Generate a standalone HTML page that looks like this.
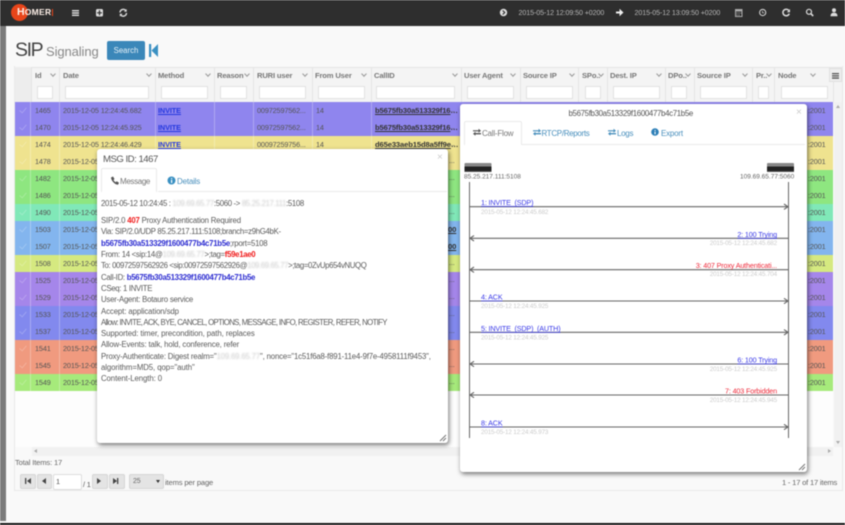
<!DOCTYPE html>
<html><head><meta charset="utf-8"><title>HOMER SIP Signaling</title>
<style>
html,body{margin:0;padding:0;background:#f9f9f9}
#p{position:relative;width:845px;height:525px;overflow:hidden;background:#f9f9f9;font-family:"Liberation Sans",sans-serif;font-size:7.3px;letter-spacing:-.15px;color:#555;filter:blur(.5px)}
#p div,#p span.a,#p i{position:absolute}
.t{white-space:nowrap}
.f{top:86px;height:11px;background:#fff;border:1px solid #e2e2e2}
.h{top:71px;font-weight:bold;font-size:7.6px;color:#777;white-space:nowrap}
i.c{top:72px;width:3px;height:3px;border-right:1px solid #999;border-bottom:1px solid #999;transform:rotate(45deg)}
.vh{top:67px;height:35px;width:1px;background:#e4e4e4}
.r{left:15px;width:818px;height:17px;line-height:17px;overflow:hidden}
.r span{position:absolute;top:0;white-space:nowrap}
.r .k{left:1px;width:14px;top:0;height:17px;border-right:1px solid rgba(255,255,255,.3)}
.r .k:after{content:"";position:absolute;left:5px;top:4px;width:3px;height:6px;border-right:1px solid rgba(255,255,255,.22);border-bottom:1px solid rgba(255,255,255,.22);transform:rotate(40deg)}
.r .i{left:20px}
.r .d{left:48px;width:96px}
.r .m{left:143px;color:#2438df;text-decoration:underline;font-weight:bold;letter-spacing:-.1px}
.r .u{left:242px}
.r .o{left:301px}
.r .l{left:360px;width:85px;overflow:hidden;text-overflow:ellipsis;font-weight:bold;color:#333;text-decoration:underline;font-size:7.6px;letter-spacing:-.12px}
.r .n{left:793px}
.r b.s{position:absolute;top:0;width:1px;height:17px;background:rgba(255,255,255,.28)}
.modal{background:#fff;border-radius:3px;box-shadow:1px 2px 5px rgba(0,0,0,.55)}
.msg{left:101px;top:215px;font-size:7.8px;line-height:11.32px;color:#5a5a5a;white-space:nowrap}
.msg p{margin:0;height:11.32px}
.msg b.bl{color:#2a2ad0}
.msg b.rd{color:#f01a1a}
.ip{color:#ccc;filter:blur(.7px)}
.tab{font-size:8px;color:#4a90bd;letter-spacing:-.05px;white-space:nowrap}
.btn{top:474px;height:13px;background:#e4e4e4;border:1px solid #d5d5d5;border-radius:2px;text-align:center;line-height:13px;font-size:7px;color:#333}
</style></head><body>
<div id="p">
<!-- top bar -->
<div style="left:0;top:0;width:845px;height:26px;background:#2e2e2e"></div>
<div style="left:0;top:26px;width:6px;height:495px;background:#7b7b7b"></div>
<div style="left:0;top:523px;width:845px;height:2px;background:#111"></div>
<div style="left:11px;top:4px;width:17px;height:17px;border-radius:50%;background:#e8451a"></div>
<div class="t" style="left:17px;top:6px;font-weight:bold;font-size:10.5px;letter-spacing:.1px;color:#fdf0e8;line-height:13px">H<span style="font-size:8.5px;letter-spacing:.3px">OMER</span></div>
<div style="left:52px;top:9px;width:1px;height:7px;background:#e8451a"></div>
<div class="t" style="left:518.500px;top:9px;color:#b5b5b5;font-size:7.1px;letter-spacing:-.08px">2015-05-12 12:09:50 +0200</div>
<div class="t" style="left:634.500px;top:9px;color:#b5b5b5;font-size:7.1px;letter-spacing:-.08px">2015-05-12 13:09:50 +0200</div>
<svg width="845" height="26" style="position:absolute;left:0;top:0" fill="#ddd" stroke="none">
<path d="M72 10h7v1.400h-7zM72 12.300h7v1.400h-7zM72 14.600h7v1.400h-7z"/>
<rect x="96" y="9" width="7" height="7.500" rx="1.500"/><path d="M98.900 10.300h1.200v1.900h1.800v1.200h-1.800v1.800h-1.200v-1.800h-1.800v-1.200h1.800z" fill="#2e2e2e"/>
<path d="M120 12.500a3.300 3.300 0 0 1 5.800-2M126.500 13a3.300 3.300 0 0 1-5.800 2" fill="none" stroke="#ddd" stroke-width="1.400"/><path d="M126.700 9v2.800h-2.800zM119.800 16.500v-2.800h2.800z"/>
<circle cx="503.500" cy="12.500" r="3.700"/><path d="M502.700 10.500l2 2-2 2" fill="none" stroke="#2e2e2e" stroke-width="1.200"/>
<path d="M616 11.500h3.500v-2.800l4 3.800-4 3.800v-2.800h-3.500z" fill="#eee"/>
<path d="M735 9h7.500v8H735z" fill="#aaa"/><path d="M736 11.500h5.500v4.500H736z" fill="#2e2e2e"/><path d="M736.500 12.500h1v1h-1zM738.500 12.500h1v1h-1zM740.500 12.500h.7v1h-.7zM736.500 14.500h1v1h-1zM738.500 14.500h1v1h-1z" fill="#aaa"/>
<circle cx="762.700" cy="12.500" r="3.100" fill="none" stroke="#ddd" stroke-width="1"/><path d="M762.500 11v1.800h1.600" fill="none" stroke="#ddd" stroke-width=".7"/>
<path d="M788.700 10.300a3.300 3.300 0 1 0 .6 3.400" fill="none" stroke="#ddd" stroke-width="1.500"/><path d="M790 9v3.200h-3.200z"/>
<circle cx="809" cy="11.800" r="2.500" fill="none" stroke="#ddd" stroke-width="1.200"/><path d="M811 13.800l2.200 2.200" stroke="#ddd" stroke-width="1.600"/>
<circle cx="834" cy="10.300" r="2"/><path d="M830.500 16.300c0-2.800 1.400-3.600 3.500-3.600s3.500.8 3.500 3.600z"/>
</svg>
<!-- title -->
<div class="t" style="left:15px;top:37px;font-size:19.500px;letter-spacing:-1.400px;color:#444;line-height:26px">SIP</div>
<div class="t" style="left:46px;top:43px;font-size:13px;letter-spacing:-.1px;color:#888;line-height:18px">Signaling</div>
<div style="left:107px;top:41px;width:38px;height:19px;background:#3b87b9;border-radius:2px;text-align:center;line-height:19px;color:#e8f2f8;font-size:7.8px;letter-spacing:0">Search</div>
<svg width="12" height="14" style="position:absolute;left:148px;top:44px"><path d="M1 0h2.200v13H1zM10 0v13L3.500 6.500z" fill="#3a90c2"/></svg>
<!-- table container -->
<div style="left:15px;top:391px;width:818px;height:56px;background:#fdfdfd"></div>
<div style="left:14px;top:66px;width:829px;height:425px;border:1px solid #e9e9e9;border-top:0;box-sizing:border-box"></div>
<div style="left:15px;top:67px;width:827px;height:35px;background:#f4f4f4;border-top:1px solid #e4e4e4;box-sizing:border-box"></div>
<div style="left:15px;top:67px;width:16px;height:35px;background:#ededed"></div>
<div class="vh" style="left:31px"></div><div class="vh" style="left:59px"></div><div class="vh" style="left:155px"></div><div class="vh" style="left:214px"></div><div class="vh" style="left:253px"></div><div class="vh" style="left:312px"></div><div class="vh" style="left:371px"></div><div class="vh" style="left:461px"></div><div class="vh" style="left:520px"></div><div class="vh" style="left:578px"></div><div class="vh" style="left:607px"></div><div class="vh" style="left:665px"></div><div class="vh" style="left:694px"></div><div class="vh" style="left:752px"></div><div class="vh" style="left:774px"></div><div class="vh" style="left:833px"></div>
<div class="h" style="left:35px">Id</div><div class="h" style="left:63px">Date</div><div class="h" style="left:158px">Method</div><div class="h" style="left:217px">Reason</div><div class="h" style="left:257px">RURI user</div><div class="h" style="left:315px">From User</div><div class="h" style="left:374px">CallID</div><div class="h" style="left:464px">User Agent</div><div class="h" style="left:523px">Source IP</div><div class="h" style="left:582px">SPo..</div><div class="h" style="left:610px">Dest. IP</div><div class="h" style="left:668px">DPo..</div><div class="h" style="left:697px">Source IP</div><div class="h" style="left:756px">Pr..</div><div class="h" style="left:778px">Node</div>
<i class="c" style="left:50.500px"></i><i class="c" style="left:146.500px"></i><i class="c" style="left:205.500px"></i><i class="c" style="left:244.500px"></i><i class="c" style="left:303px"></i><i class="c" style="left:362px"></i><i class="c" style="left:452.500px"></i><i class="c" style="left:511px"></i><i class="c" style="left:570px"></i><i class="c" style="left:599px"></i><i class="c" style="left:656.500px"></i><i class="c" style="left:686px"></i><i class="c" style="left:743px"></i><i class="c" style="left:767px"></i><i class="c" style="left:811px"></i>
<div class="f" style="left:37px;width:14px"></div><div class="f" style="left:65px;width:82px"></div><div class="f" style="left:161px;width:45px"></div><div class="f" style="left:220px;width:25px"></div><div class="f" style="left:259px;width:45px"></div><div class="f" style="left:318px;width:45px"></div><div class="f" style="left:376px;width:77px"></div><div class="f" style="left:467px;width:45px"></div><div class="f" style="left:526px;width:45px"></div><div class="f" style="left:585px;width:14px"></div><div class="f" style="left:613px;width:45px"></div><div class="f" style="left:671px;width:14px"></div><div class="f" style="left:700px;width:45px"></div><div class="f" style="left:758px;width:9px"></div><div class="f" style="left:781px;width:45px"></div>
<div style="left:829px;top:68px;width:13px;height:14px;background:#eee;border:1px solid #e0e0e0;box-sizing:border-box"></div>
<svg width="9" height="8" style="position:absolute;left:831.500px;top:72.500px"><path d="M0 0h7v1.300H0zM0 2.200h7v1.300H0zM0 4.400h7v1.300H0z" fill="#555"/></svg>
<!-- rows -->
<div class="r" style="top:102px;background:#8f85ee"><span class="k"></span><b class="s" style="left:44px"></b><b class="s" style="left:140px"></b><b class="s" style="left:199px"></b><b class="s" style="left:238px"></b><b class="s" style="left:297px"></b><b class="s" style="left:356px"></b><span class="i">1465</span><span class="d">2015-12-05 12:24:45.682</span><span class="m">INVITE</span><span class="u">00972597562...</span><span class="o">14</span><span class="l">b5675fb30a513329f1600477b4c71b5e</span><span class="n">:2001</span></div>
<div class="r" style="top:119px;background:#8f85ee"><span class="k"></span><b class="s" style="left:44px"></b><b class="s" style="left:140px"></b><b class="s" style="left:199px"></b><b class="s" style="left:238px"></b><b class="s" style="left:297px"></b><b class="s" style="left:356px"></b><span class="i">1470</span><span class="d">2015-12-05 12:24:45.925</span><span class="m">INVITE</span><span class="u">00972597562...</span><span class="o">14</span><span class="l">b5675fb30a513329f1600477b4c71b5e</span><span class="n">:2001</span></div>
<div class="r" style="top:136px;background:#efe38f"><span class="k"></span><b class="s" style="left:44px"></b><b class="s" style="left:140px"></b><b class="s" style="left:199px"></b><b class="s" style="left:238px"></b><b class="s" style="left:297px"></b><b class="s" style="left:356px"></b><span class="i">1474</span><span class="d">2015-12-05 12:24:46.429</span><span class="m">INVITE</span><span class="u">00097259756...</span><span class="o">14</span><span class="l">d65e33aeb15d8a5ff9e0477b4c71b5e</span><span class="n">:2001</span></div>
<div class="r" style="top:153px;background:#efe38f"><span class="k"></span><b class="s" style="left:44px"></b><span class="i">1478</span><span class="d">2015-12-05 12:24:46.501</span><span class="n">:2001</span></div>
<div class="r" style="top:170px;background:#8ee680"><span class="k"></span><b class="s" style="left:44px"></b><span class="i">1482</span><span class="d">2015-12-05 12:24:46.722</span><span class="n">:2001</span></div>
<div class="r" style="top:187px;background:#8ee680"><span class="k"></span><b class="s" style="left:44px"></b><span class="i">1486</span><span class="d">2015-12-05 12:24:46.811</span><span class="n">:2001</span></div>
<div class="r" style="top:204px;background:#80e8b8"><span class="k"></span><b class="s" style="left:44px"></b><span class="i">1490</span><span class="d">2015-12-05 12:24:46.990</span><span class="n">:2001</span></div>
<div class="r" style="top:221px;background:#83b5ee"><span class="k"></span><b class="s" style="left:44px"></b><span class="i">1503</span><span class="d">2015-12-05 12:24:47.102</span><span class="l" style="left:433px;width:12px">00</span><span class="n">:2001</span></div>
<div class="r" style="top:238px;background:#83b5ee"><span class="k"></span><b class="s" style="left:44px"></b><span class="i">1507</span><span class="d">2015-12-05 12:24:47.203</span><span class="l" style="left:433px;width:12px">00</span><span class="n">:2001</span></div>
<div class="r" style="top:255px;background:#d5e980"><span class="k"></span><b class="s" style="left:44px"></b><span class="i">1508</span><span class="d">2015-12-05 12:24:47.310</span><span class="n">:2001</span></div>
<div class="r" style="top:272px;background:#a586ea"><span class="k"></span><b class="s" style="left:44px"></b><span class="i">1525</span><span class="d">2015-12-05 12:24:47.422</span><span class="n">:2001</span></div>
<div class="r" style="top:289px;background:#a586ea"><span class="k"></span><b class="s" style="left:44px"></b><span class="i">1529</span><span class="d">2015-12-05 12:24:47.533</span><span class="n">:2001</span></div>
<div class="r" style="top:306px;background:#8289ee"><span class="k"></span><b class="s" style="left:44px"></b><span class="i">1533</span><span class="d">2015-12-05 12:24:47.644</span><span class="n">:2001</span></div>
<div class="r" style="top:323px;background:#8289ee"><span class="k"></span><b class="s" style="left:44px"></b><span class="i">1537</span><span class="d">2015-12-05 12:24:47.755</span><span class="n">:2001</span></div>
<div class="r" style="top:340px;background:#f09a7f"><span class="k"></span><b class="s" style="left:44px"></b><span class="i">1541</span><span class="d">2015-12-05 12:24:47.866</span><span class="n">:2001</span></div>
<div class="r" style="top:357px;background:#f09a7f"><span class="k"></span><b class="s" style="left:44px"></b><span class="i">1545</span><span class="d">2015-12-05 12:24:47.977</span><span class="n">:2001</span></div>
<div class="r" style="top:374px;background:#a6ea7b"><span class="k"></span><b class="s" style="left:44px"></b><span class="i">1549</span><span class="d">2015-12-05 12:24:48.088</span><span class="n">:2001</span></div>
<!-- slivers between modals -->
<div class="t" style="left:449px;top:105px;color:#555">...</div><div class="t" style="left:449px;top:122px;color:#555">...</div><div class="t" style="left:449px;top:139px;color:#555">...</div><div class="t" style="left:449px;top:156px;color:#555">...</div><div class="t" style="left:449px;top:173px;color:#555">...</div><div class="t" style="left:449px;top:190px;color:#555">...</div><div class="t" style="left:449px;top:207px;color:#555">...</div><div class="t" style="left:449px;top:258px;color:#555">...</div><div class="t" style="left:449px;top:275px;color:#555">...</div><div class="t" style="left:449px;top:292px;color:#555">...</div><div class="t" style="left:449px;top:309px;color:#555">...</div><div class="t" style="left:449px;top:326px;color:#555">...</div><div class="t" style="left:449px;top:343px;color:#555">...</div><div class="t" style="left:449px;top:360px;color:#555">...</div><div class="t" style="left:449px;top:377px;color:#555">...</div>
<!-- scrollbars -->
<div style="left:834px;top:102px;width:8px;height:345px;background:#f1f1f1"></div>
<div style="left:836px;top:105px;width:0;height:0;border:2px solid transparent;border-bottom:3px solid #aaa;border-top:0"></div>
<div style="left:836px;top:441px;width:0;height:0;border:2px solid transparent;border-top:3px solid #aaa;border-bottom:0"></div>
<div style="left:32px;top:447px;width:801px;height:9px;background:#f1f1f1"></div>
<div style="left:34px;top:449px;width:0;height:0;border:2px solid transparent;border-right:3px solid #aaa;border-left:0"></div>
<div style="left:828px;top:449px;width:0;height:0;border:2px solid transparent;border-left:3px solid #aaa;border-right:0"></div>
<!-- footer -->
<div class="t" style="left:15px;top:458px;color:#666;font-size:7.6px">Total Items: 17</div>
<div class="btn" style="left:20px;width:14px"></div><div class="btn" style="left:37px;width:13px"></div>
<div style="left:53px;top:474px;width:27px;height:14px;background:#fff;border:1px solid #ddd;border-radius:2px;line-height:14px;text-indent:2px;font-size:7.3px">1</div>
<div class="t" style="left:83px;top:480px;font-size:7.3px">/ 1</div>
<div class="btn" style="left:92px;width:14px"></div><div class="btn" style="left:109px;width:14px"></div>
<div class="btn" style="left:129px;width:33px;text-align:left;text-indent:3px;color:#666">25</div>
<div style="left:156px;top:480px;width:0;height:0;border:2px solid transparent;border-top:3px solid #333;border-bottom:0"></div>
<div class="t" style="left:165px;top:478px;color:#666;font-size:7.6px">items per page</div>
<div class="t" style="left:782px;top:478px;color:#666;font-size:7.6px;letter-spacing:-.2px">1 - 17 of 17 items</div>
<svg width="125" height="10" style="position:absolute;left:0;top:477px" fill="#444"><path d="M25 1h1.300v6H25zM31 1v6l-4-3zM46 1v6l-4-3zM97 1v6l4-3zM113 1v6l4-3zM117 1h1.300v6H117z"/></svg>
<!-- MSG modal -->
<div class="modal" style="left:97px;top:149px;width:351px;height:294px"></div>
<div class="t" style="left:103px;top:153px;font-size:9.600px;color:#555;letter-spacing:-.5px;line-height:13px">MSG ID: 1467</div>
<div class="t" style="left:437px;top:152px;font-size:10px;color:#ccc">×</div>
<div style="left:158px;top:191px;width:289px;height:1px;background:#eaeaea"></div>
<div style="left:101px;top:168px;width:56px;height:24px;background:#fff;border:1px solid #eaeaea;border-bottom:0;box-sizing:border-box;border-radius:2px 2px 0 0"></div>
<svg width="10" height="10" style="position:absolute;left:110px;top:176px"><path d="M1 1.500l2-1 1.500 2.500-1 1c.5 1 1.200 1.700 2.200 2.200l1-1 2.300 1.500-1 2C5 8.700 1.300 5 1 1.500z" fill="#555"/></svg>
<div class="tab" style="left:120px;top:177px;color:#777;letter-spacing:-.35px">Message</div>
<svg width="9" height="9" style="position:absolute;left:167px;top:175.500px"><circle cx="4.500" cy="4.500" r="4" fill="#3a90c2"/><path d="M4 2h1.200v1H4zM4 3.800h1.200V7H4z" fill="#fff"/></svg>
<div class="tab" style="left:177px;top:177px;letter-spacing:-.2px">Details</div>
<div class="t" style="left:101px;top:199px;font-size:7.800px;color:#5a5a5a;letter-spacing:-.34px">2015-05-12 10:24:45 : <span class="ip">109.69.65.77</span>:5060 -&gt; <span class="ip">85.25.217.111</span>:5108</div>
<div class="msg">
<p style="letter-spacing:-.195px">SIP/2.0 <b class="rd">407</b> Proxy Authentication Required</p>
<p style="letter-spacing:-.31px">Via: SIP/2.0/UDP 85.25.217.111:5108;branch=z9hG4bK-</p>
<p style="letter-spacing:-.25px"><b class="bl">b5675fb30a513329f1600477b4c71b5e</b>;rport=5108</p>
<p style="letter-spacing:-.3px">From: 14 &lt;sip:14@<span class="ip">109.69.65.77</span>&gt;;tag=<b class="rd">f59e1ae0</b></p>
<p style="letter-spacing:-.375px">To: 00972597562926 &lt;sip:00972597562926@<span class="ip">109.69.65.77</span>&gt;;tag=0ZvUp654vNUQQ</p>
<p style="letter-spacing:-.27px">Call-ID: <b class="bl">b5675fb30a513329f1600477b4c71b5e</b></p>
<p style="letter-spacing:-.31px">CSeq: 1 INVITE</p>
<p style="letter-spacing:-.22px">User-Agent: Botauro service</p>
<p style="letter-spacing:-.1px">Accept: application/sdp</p>
<p style="letter-spacing:-.64px">Allow: INVITE, ACK, BYE, CANCEL, OPTIONS, MESSAGE, INFO, REGISTER, REFER, NOTIFY</p>
<p style="letter-spacing:-.08px">Supported: timer, precondition, path, replaces</p>
<p style="letter-spacing:-.135px">Allow-Events: talk, hold, conference, refer</p>
<p style="letter-spacing:-.17px">Proxy-Authenticate: Digest realm="<span class="ip">109.69.65.77</span>", nonce="1c51f6a8-f891-11e4-9f7e-4958111f9453",</p>
<p style="letter-spacing:-.08px">algorithm=MD5, qop="auth"</p>
<p style="letter-spacing:-.08px">Content-Length: 0</p>
</div>
<svg width="8" height="8" style="position:absolute;left:439px;top:434px"><path d="M7 1L1 7M7 4L4 7" stroke="#777" stroke-width="1"/></svg>
<!-- Flow modal -->
<div class="modal" style="left:460px;top:104px;width:347px;height:368px"></div>
<div class="t" style="left:568.500px;top:109px;font-size:7.900px;color:#555;letter-spacing:-.35px">b5675fb30a513329f1600477b4c71b5e</div>
<div class="t" style="left:796px;top:107px;font-size:10px;color:#ccc">×</div>
<div style="left:522px;top:144px;width:283px;height:1px;background:#eaeaea"></div>
<div style="left:464px;top:121px;width:58px;height:24px;background:#fff;border:1px solid #eaeaea;border-bottom:0;box-sizing:border-box;border-radius:2px 2px 0 0"></div>
<svg width="845" height="525" style="position:absolute;left:0;top:0" font-family="Liberation Sans, sans-serif">
<path d="M473 130.200h5.500v-1.400l2.500 2-2.500 2v-1.400H473zM481 133h-5.500v-1.200L473 133.800l2.500 2v-1.400H481z" fill="#555"/>
<path d="M533 130.200h5.500v-1.400l2.500 2-2.500 2v-1.400H533zM541 133h-5.500v-1.200L533 133.800l2.500 2v-1.400H541zM608 130.200h5.500v-1.400l2.500 2-2.500 2v-1.400H608zM616 133h-5.500v-1.200L608 133.800l2.500 2v-1.400H616z" fill="#4a90bd"/>
<circle cx="655" cy="132" r="3.800" fill="#2f80b8"/><path d="M654.500 130h1.100v1h-1.100zM654.500 131.700h1.100v2.600h-1.100z" fill="#fff"/>
<rect x="464.500" y="163" width="27" height="4" rx="1" fill="#888"/><rect x="464.500" y="166.500" width="27" height="4.500" fill="#222"/><rect x="464.500" y="171" width="27" height="1" fill="#555"/>
<rect x="767" y="163" width="27" height="4" rx="1" fill="#888"/><rect x="767" y="166.500" width="27" height="4.500" fill="#222"/><rect x="767" y="171" width="27" height="1" fill="#555"/>
<text x="464" y="178.500" font-size="6.500px" fill="#666" letter-spacing="0">85.25.217.111:5108</text>
<text x="740" y="178.500" font-size="6.500px" fill="#666" letter-spacing="0">109.69.65.77:5060</text>
<path d="M469.500 182V438M788.500 182V438" stroke="#666" stroke-width="1" fill="none"/>
<g stroke="#666" stroke-width="1.100" fill="none">
<path d="M470 206.700H788M784 204l4 2.700-4 2.700"/>
<path d="M470 238.300H788M474 235.600l-4 2.700 4 2.700"/>
<path d="M470 269.700H788M474 267l-4 2.700 4 2.700"/>
<path d="M470 301H788M784 298.300l4 2.700-4 2.700"/>
<path d="M470 332.300H788M784 329.600l4 2.700-4 2.700"/>
<path d="M470 364H788M474 361.300l-4 2.700 4 2.700"/>
<path d="M470 395H788M474 392.300l-4 2.700 4 2.700"/>
<path d="M470 427H788M784 424.300l4 2.700-4 2.700"/>
</g>
<g font-size="7.200px" fill="#3a3ae8" text-decoration="underline">
<text x="481" y="205">1: INVITE&#160;&#160;(SDP)</text>
<text x="777" y="237" text-anchor="end">2: 100 Trying</text>
<text x="481" y="299.500">4: ACK</text>
<text x="481" y="331">5: INVITE&#160;&#160;(SDP)&#160;&#160;(AUTH)</text>
<text x="777" y="362.500" text-anchor="end">6: 100 Trying</text>
<text x="481" y="425.500">8: ACK</text>
</g>
<g font-size="7.200px" fill="#ee2a3a">
<text x="777" y="268" text-anchor="end">3: 407 Proxy Authenticati...</text>
<text x="777" y="393.500" text-anchor="end">7: 403 Forbidden</text>
</g>
<g font-size="6.300px" fill="#cccccc">
<text x="481" y="214">2015-05-12 12:24:45.682</text>
<text x="777" y="245" text-anchor="end">2015-05-12 12:24:45.682</text>
<text x="777" y="276" text-anchor="end">2015-05-12 12:24:45.704</text>
<text x="481" y="308">2015-05-12 12:24:45.925</text>
<text x="481" y="339.500">2015-05-12 12:24:45.925</text>
<text x="777" y="371" text-anchor="end">2015-05-12 12:24:45.925</text>
<text x="777" y="402" text-anchor="end">2015-05-12 12:24:45.945</text>
<text x="481" y="434">2015-05-12 12:24:45.973</text>
</g>
<path d="M805 464l-6 6M805 467l-3 3" stroke="#777" stroke-width="1"/>
</svg>
<div class="tab" style="left:482px;top:129px;color:#777;letter-spacing:-.22px">Call-Flow</div>
<div class="tab" style="left:541.500px;top:129px;letter-spacing:-.33px">RTCP/Reports</div>
<div class="tab" style="left:617px;top:129px;letter-spacing:-.3px">Logs</div>
<div class="tab" style="left:661px;top:129px;letter-spacing:-.2px">Export</div>
</div>
</body></html>
